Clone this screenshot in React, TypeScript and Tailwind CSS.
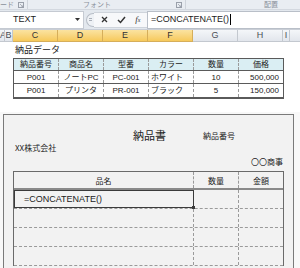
import React from "react";

const hdrCols = [
  { l: "A", w: "w-[5px]", sel: false },
  { l: "B", w: "w-[8px]", sel: false },
  { l: "C", w: "w-[45px]", sel: true },
  { l: "D", w: "w-[45px]", sel: true },
  { l: "E", w: "w-[45px]", sel: true },
  { l: "F", w: "w-[45px]", sel: true },
  { l: "G", w: "w-[45px]", sel: false },
  { l: "H", w: "w-[45px]", sel: false },
  { l: "I", w: "w-[7px]", sel: false },
];

const dataHead = ["納品番号", "商品名", "型番", "カラー", "数量", "価格"];
const dataRows = [
  ["P001", "ノートPC", "PC-001", "ホワイト", "10", "500,000"],
  ["P001", "プリンタ", "PR-001", "ブラック", "5", "150,000"],
];

function Launcher() {
  return (
    <svg width="6" height="6" viewBox="0 0 6 6" className="shrink-0">
      <rect x="0.5" y="0.5" width="5" height="5" fill="none" stroke="#9aa0aa" strokeWidth="1" />
      <path d="M2 2 L5 5 M3 5 H5 V3" stroke="#9aa0aa" strokeWidth="0.8" fill="none" />
    </svg>
  );
}

export default function App() {
  return (
    <div className="w-[300px] h-[268px] overflow-hidden bg-white relative font-['Liberation_Sans','Noto_Sans_CJK_JP',sans-serif] text-[#222]">
      {/* ribbon group labels */}
      <div className="h-[10px] bg-[#e9edf2] flex text-[7px] leading-[10px] text-[#8b919b] border-b border-[#d3d8df]">
        <div className="w-[28px] flex items-center justify-between pr-[3px] border-r border-[#cfd4db]">
          <span>ード</span>
          <Launcher />
        </div>
        <div className="w-[158px] flex items-center border-r border-[#cfd4db] pr-[3px]">
          <span className="flex-1 text-center pr-[10px]">フォント</span>
          <Launcher />
        </div>
        <div className="flex-1 flex justify-end pr-[22px]">配置</div>
      </div>
      {/* formula bar */}
      <div className="h-[20px] bg-[#e3e8ee] flex items-center border-b border-[#c9ced6]">
        <div className="w-[84px] h-[18px] bg-white border border-[#c5cad2] border-l-0 flex items-center pl-[13px] pr-[3px] text-[9px]">
          <span className="flex-1">TEXT</span>
          <svg width="5" height="3" viewBox="0 0 5 3"><path d="M0 0 H5 L2.5 3 Z" fill="#333" /></svg>
        </div>
        <div className="w-[63px] flex items-center">
          <div className="ml-[2px] w-[8px] h-[14px] rounded-l-full border border-r-0 border-[#b8bec7] bg-[#eef1f5] flex items-center justify-center">
            <div className="w-[3px] h-[3px] border-t border-b border-[#aab0b9]" />
          </div>
          <div className="flex-1 h-[16px] bg-[#f7f8fa] border-y border-[#cfd4db] flex items-center justify-around px-[2px] text-[#333]">
            <svg width="7" height="7" viewBox="0 0 7 7"><path d="M1 1 L6 6 M6 1 L1 6" stroke="#333" strokeWidth="1.3" /></svg>
            <svg width="9" height="8" viewBox="0 0 9 8"><path d="M1 4 L3.5 6.5 L8 1" stroke="#333" strokeWidth="1.5" fill="none" /></svg>
            <span className="text-[9px] italic font-['Liberation_Serif',serif] leading-none">
              f<span className="text-[6px]">x</span>
            </span>
          </div>
        </div>
        <div className="flex-1 h-[18px] bg-white border border-[#b9bfc8] border-r-0 flex items-center pl-[3px] text-[9px]">
          <span>=CONCATENATE()</span>
          <span className="w-[1px] h-[11px] bg-black ml-[1px]" />
        </div>
      </div>
      {/* column headers */}
      <div className="h-[12px] flex text-[9px] leading-[11px]">
        {hdrCols.map((c) => (
          <div
            key={c.l}
            className={`${c.w} shrink-0 text-center overflow-hidden border-r border-b ${
              c.sel
                ? "bg-gradient-to-b from-[#fbe3a0] to-[#f6c95a] border-[#d6ae5a] text-[#333]"
                : "bg-gradient-to-b from-[#f4f6f9] to-[#e2e6ec] border-[#c3c8cf] text-[#4a4f57]"
            }`}
          >
            {c.l}
          </div>
        ))}
        <div className="flex-1 bg-gradient-to-b from-[#f4f6f9] to-[#e2e6ec] border-b border-[#c3c8cf]" />
      </div>
      {/* title row */}
      <div className="h-[16px] pl-[15px] text-[9px] leading-[16px] font-['Noto_Sans_CJK_JP',sans-serif]">納品データ</div>
      {/* data table */}
      <div className="ml-[13px] w-[271px] border border-[#5a5a5a] border-b-2 text-[8px] font-['Liberation_Sans','Noto_Sans_CJK_JP',sans-serif]">
        <div className="h-[12px] flex bg-[#daeef3] border-b border-[#5a5a5a]">
          {dataHead.map((h, i) => (
            <div
              key={h}
              className={`w-[45px] shrink-0 text-center leading-[12px] ${i < 5 ? "border-r border-dashed border-[#9a9a9a]" : "flex-1"}`}
            >
              {h}
            </div>
          ))}
        </div>
        {dataRows.map((r, ri) => (
          <div key={ri} className={`h-[13px] flex bg-white ${ri === 0 ? "border-b border-[#5a5a5a]" : ""}`}>
            {r.map((v, i) => (
              <div
                key={i}
                className={`w-[45px] shrink-0 leading-[13px] ${i === 5 ? "text-right pr-[4px] flex-1" : i === 3 ? "text-left pl-[2px]" : "text-center"} ${
                  i < 5 ? "border-r border-dashed border-[#9a9a9a]" : ""
                }`}
              >
                {v}
              </div>
            ))}
          </div>
        ))}
      </div>
      {/* lower image area */}
      <div className="mt-[13px] h-[200px] bg-[#f8f8f8] pt-[2px] pl-[3px] pr-[6px]">
        <div className="h-full bg-[#f2f2f2] border border-[#7a7a7a] border-b-0 font-['Noto_Sans_CJK_JP',sans-serif]">
          <div className="h-[28px] flex items-end">
            <span className="ml-[129px] text-[11px] leading-[14px] mb-[1px]">納品書</span>
            <span className="ml-[37px] text-[8px] leading-[12px] mb-[1px]">納品番号</span>
          </div>
          <div className="h-[10px] pl-[11px] text-[8px] leading-[10px]">XX株式会社</div>
          <div className="h-[18px] flex items-center justify-end pr-[10px] text-[8px]">〇〇商事</div>
          <div className="ml-[9px] w-[271px] border-l border-t border-r border-[#6a6a6a] text-[8px]">
            <div className="h-[18px] flex border-b-2 border-[#8a8a8a]">
              <div className="w-[180px] text-center leading-[17px] border-r border-dashed border-[#9a9a9a]">品名</div>
              <div className="w-[45px] text-center leading-[17px] border-r border-dashed border-[#9a9a9a]">数量</div>
              <div className="flex-1 text-center leading-[17px]">金額</div>
            </div>
            {[0, 1, 2, 3].map((i) => (
              <div key={i} className="h-[19px] flex border-b border-dashed border-[#9a9a9a]">
                <div
                  className={`w-[180px] relative ${
                    i === 0 ? "border border-[#3a3a3a] pl-[9px] leading-[17px] text-[9px] font-['Liberation_Sans',sans-serif]" : "border-r border-dashed border-[#9a9a9a]"
                  }`}
                >
                  {i === 0 ? "=CONCATENATE()" : ""}
                  {i === 0 && <span className="absolute right-[-2px] bottom-[-2px] w-[3px] h-[3px] bg-[#3a3a3a]" />}
                </div>
                <div className="w-[45px] border-r border-dashed border-[#9a9a9a]" />
                <div className="flex-1" />
              </div>
            ))}
          </div>
        </div>
      </div>
    </div>
  );
}
